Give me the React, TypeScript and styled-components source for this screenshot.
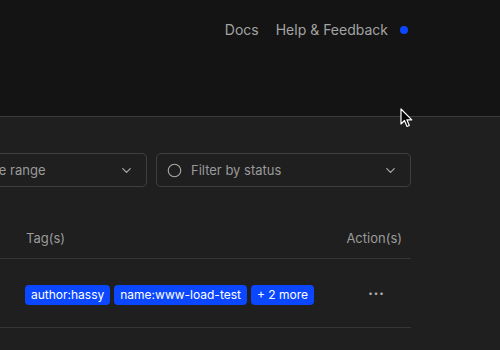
import React from 'react';
import styled, { createGlobalStyle } from 'styled-components';
import { ChevronDown, Circle, Calendar } from 'lucide-react';

const GlobalStyle = createGlobalStyle`
  html, body {
    margin: 0;
    padding: 0;
    background: #1f1f1f;
    font-family: Inter, 'Noto Sans', sans-serif;
    overflow: hidden;
  }
`;

const tags = ['author:hassy', 'name:www-load-test', '+ 2 more'];

const App = () => {
  return (
    <Page>
      <GlobalStyle />
      <TopBar>
        <NavLink>Docs</NavLink>
        <NavLink>Help &amp; Feedback</NavLink>
        <StatusDot />
      </TopBar>

      <Main>
        <Content>
          <FilterRow>
            <Select $width={203}>
              <SelectLabel>
                <Calendar size={14} color="#9a9a9a" />
                Date range
              </SelectLabel>
              <ChevronDown size={15} color="#a8a8a8" />
            </Select>
            <Select $width={255}>
              <SelectLabel>
                <Circle size={15} color="#a8a8a8" strokeWidth={1.8} />
                Filter by status
              </SelectLabel>
              <ChevronDown size={15} color="#a8a8a8" />
            </Select>
          </FilterRow>

          <Table>
            <HeaderRow>
              <TagCell>Tag(s)</TagCell>
              <ActionHead>Action(s)</ActionHead>
            </HeaderRow>
            <BodyRow>
              <TagCell>
                <TagList>
                  {tags.map((t) => (
                    <Tag key={t}>{t}</Tag>
                  ))}
                </TagList>
              </TagCell>
              <ActionCell>
                <MoreButton>•••</MoreButton>
              </ActionCell>
            </BodyRow>
          </Table>
        </Content>
      </Main>

      <Cursor width="14" height="20" viewBox="0 0 14 20">
        <path
          d="M1 1 L1 16 L4.5 12.5 L7 18.5 L9.3 17.5 L6.9 11.8 L11.8 11.8 Z"
          fill="#000"
          stroke="#fff"
          strokeWidth="1.2"
          strokeLinejoin="round"
        />
      </Cursor>
    </Page>
  );
};

export default App;

const Page = styled.div`
  position: relative;
  width: 500px;
  height: 350px;
  background: #1f1f1f;
  overflow: hidden;
`;

const TopBar = styled.div`
  height: 117px;
  box-sizing: border-box;
  background: #141414;
  border-bottom: 1px solid #3c3c3c;
  display: flex;
  align-items: flex-start;
  justify-content: flex-end;
  gap: 17px;
  padding: 21px 92px 0 0;
`;

const NavLink = styled.a`
  font-size: 14px;
  line-height: 18px;
  color: #a3a3a3;
  cursor: pointer;
`;

const StatusDot = styled.span`
  width: 8px;
  height: 8px;
  border-radius: 50%;
  background: #0a47ff;
  margin: 5px 0 0 -5px;
`;

const Main = styled.div`
  padding-top: 36px;
`;

const Content = styled.div`
  width: 467px;
  margin-left: -56px;
`;

const FilterRow = styled.div`
  display: flex;
  gap: 9px;
`;

const Select = styled.div<{ $width: number }>`
  width: ${(p) => p.$width}px;
  height: 34px;
  box-sizing: border-box;
  border: 1px solid #3f3f3f;
  border-radius: 5px;
  display: flex;
  align-items: center;
  justify-content: space-between;
  padding: 0 12px 0 10px;
  color: #9a9a9a;
  font-size: 13px;
`;

const SelectLabel = styled.span`
  display: flex;
  align-items: center;
  gap: 9px;
`;

const Table = styled.div`
  margin-top: 31px;
`;

const HeaderRow = styled.div`
  display: flex;
  align-items: center;
  height: 40px;
  border-bottom: 1px solid #363636;
  font-size: 13px;
  color: #9b9b9b;
`;

const BodyRow = styled.div`
  display: flex;
  align-items: center;
  height: 68px;
  border-bottom: 1px solid #363636;
`;

const TagCell = styled.div`
  flex: 1;
  padding-left: 82px;
`;

const ActionHead = styled.div`
  width: 80px;
  text-align: right;
  padding-right: 9px;
`;

const ActionCell = styled.div`
  width: 80px;
  display: flex;
  justify-content: center;
  padding-left: 28px;
`;

const TagList = styled.div`
  display: flex;
  gap: 4px;
  margin: 3px 0 0 -1px;
`;

const Tag = styled.span`
  background: #0a47ff;
  color: #fff;
  font-size: 12px;
  line-height: 20px;
  padding: 0 6px;
  border-radius: 4px;
  white-space: nowrap;
`;

const MoreButton = styled.span`
  color: #b0b0b0;
  font-size: 8px;
  letter-spacing: 1px;
`;

const Cursor = styled.svg`
  position: absolute;
  left: 400px;
  top: 108px;
`;
